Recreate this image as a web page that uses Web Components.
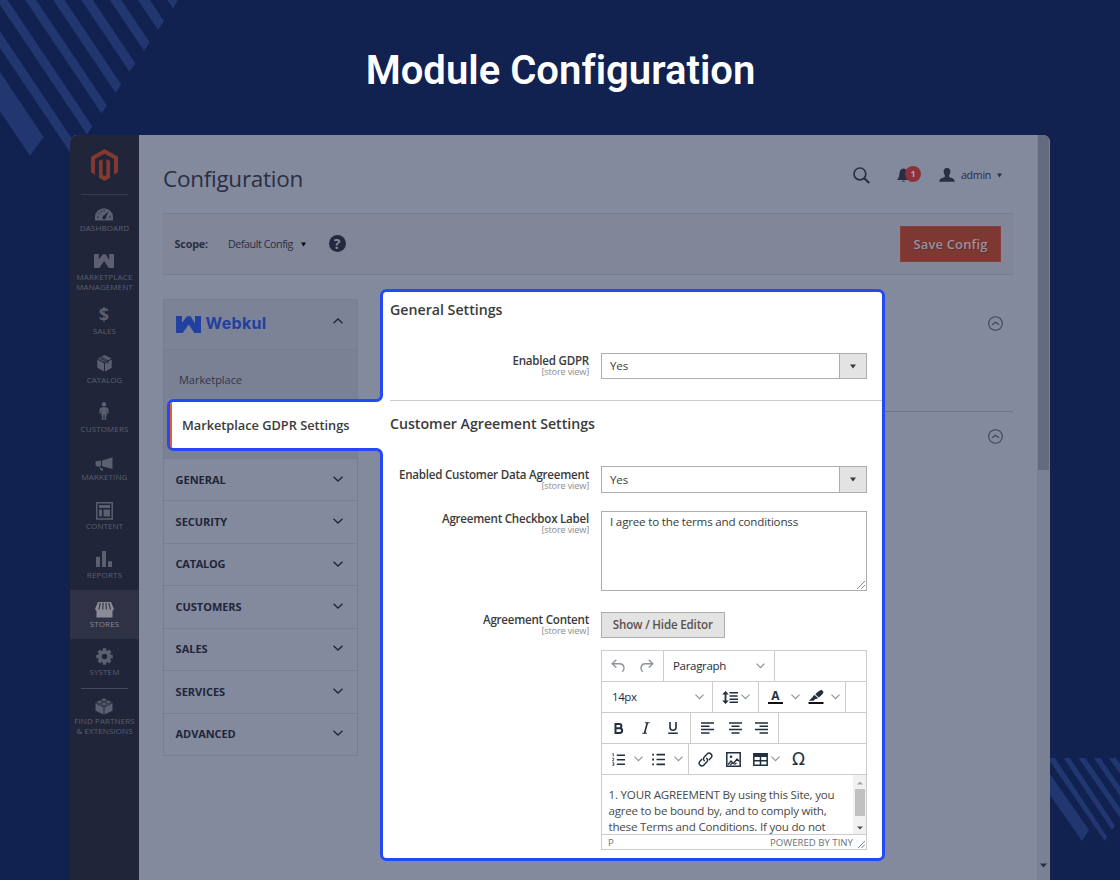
<!DOCTYPE html>
<html lang="en">
<head>
<meta charset="utf-8">
<title>Module Configuration</title>
<style>
    html, body {
        margin: 0;
        width: 1120px;
        height: 880px;
        overflow: hidden;
    }
    body {
        background: #112150;
        font-family: "Open Sans", "Noto Sans", sans-serif;
    }
</style>
</head>
<body>
<config-page></config-page>

<script>
const icons = {
    magento: ['0 0 81 96', '<path fill="currentColor" d="M40.500 0L81 23V70L69 77V30L40.500 14L12 30V77L0 70V23Z M24 36L35 30V78L40.500 81L46 78V30L57 36V86L40.500 96L24 86Z"/>'],
    gauge: ['0 0 18 13', '<path fill="currentColor" fill-rule="evenodd" d="M0 12.500V9a9 8.800 0 0 1 18 0v3.500zM7.300 9.600a1.800 1.800 0 0 0 3.400.8L13.300 3.600 8 8.200z"/><path stroke="#202539" stroke-width=".9" d="M2 9h2M3.600 4.600l1.300 1M9 1.800v1.700M16 9h-2M6 2.700l.6 1.300"/><circle cx="9" cy="9.700" r="1" fill="#202539"/>'],
    webkul: ['0 0 75 50', '<path fill="currentColor" d="M0 0H18V20L33 1H44L57 22V0H75V50H55L38 25L20 50H0Z"/>'],
    box: ['0 0 16 17', '<path fill="currentColor" d="M8 0L15.300 3.500 8 7.200 .7 3.500zM.300 4.600L7.500 8.300V16.600L.300 12.800zM15.700 4.600L8.500 8.300V16.600l7.200-3.800z"/><path stroke="#202539" stroke-width="1" fill="none" d="M4.200 1.900l7.400 3.700v3.200M2.500 2.800l7.400 3.700"/>'],
    person: ['0 0 10 18', '<g fill="currentColor"><circle cx="5" cy="2.300" r="2.300"/><path d="M2.500 5.200h5L9.500 7v4.500H8V8.200h-.4V12l-.7 6H5.500V12.500h-1V18H3.100L2.400 12V8.200H2v3.300H.5V7z"/></g>'],
    horn: ['0 0 18 15', '<path fill="currentColor" d="M17.500.3V12L7 9.300V3.600zM6 3.700v5.400l-1.300.2.1 1.200 2.800 1 .5 2.700L5.500 13 4 9.400H1.700L.5 8V5.200l1.200-1.300z"/>'],
    layout: ['0 0 17 18', '<path fill="none" stroke="currentColor" stroke-width="1.500" d="M.8.8h15.400v16.200H.8z"/><path fill="currentColor" d="M3 3h11v3H3zM3 7.500h3v7H3zM7.500 7.500H14v7H7.500z"/>'],
    bars: ['0 0 16 17', '<path fill="currentColor" d="M0 6h4v11H0zM6 0h4v17H6zM12 11h4v6h-4z"/>'],
    store: ['0 0 19 16', '<path fill="currentColor" d="M3 0h13l2.800 6.500a2.300 2.300 0 0 1-1.300 2.300V15.500h-16V8.800A2.300 2.300 0 0 1 .2 6.500z"/><path stroke="#2f3145" stroke-width="1.100" fill="none" d="M5.300.8L3.800 7.500M8.200.8l-.5 6.700M11 .8l.4 6.700M13.800.8l1.600 6.700"/>'],
    gear: ['0 0 18 18', '<circle cx="9" cy="9" r="4.900" fill="none" stroke="currentColor" stroke-width="4"/><path stroke="currentColor" stroke-width="3.600" d="M9 .3v3M9 14.700v3M.3 9h3M14.700 9h3M2.850 2.850L5 5M13 13l2.150 2.150M2.850 15.150L5 13M13 5l2.150-2.150"/>'],
    brick: ['0 0 18 18', '<path fill="currentColor" d="M9 1.600l8.500 4.200v8L9 17.800.5 13.800v-8z"/><path fill="none" stroke="#202539" stroke-width=".9" d="M.7 6L9 10.200 17.300 6M9 10.200V18"/><g fill="currentColor" stroke="#202539" stroke-width=".7"><ellipse cx="9" cy="2.600" rx="2.700" ry="1.600"/><ellipse cx="4.700" cy="4.800" rx="2.600" ry="1.500"/><ellipse cx="13.300" cy="4.800" rx="2.600" ry="1.500"/><ellipse cx="9" cy="7" rx="2.600" ry="1.500"/></g>'],
    search: ['0 0 17 17', '<circle cx="6.900" cy="6.900" r="5.900" fill="none" stroke="currentColor" stroke-width="1.700"/><path stroke="currentColor" stroke-width="2.300" d="M11 11l5.200 5"/>'],
    bell: ['0 0 13 14', '<path fill="currentColor" d="M6.500.5C9.500.8 10.500 3 10.600 6c.1 2.700.9 4 2.100 5.200v.9H.3v-.9C1.500 10 2.300 8.700 2.400 6 2.500 3 3.500.8 6.500.5zM5 12.700h3c-.2 1.500-2.800 1.500-3 0z"/>'],
    user: ['0 0 16 14', '<path fill="currentColor" d="M8 0c2.400 0 3.500 1.500 3.400 3.600C11.300 5.600 10.500 6.700 10 7.500c-.3 1 .3 1.700 1.500 2.100 3 .8 4 1.600 4.200 4.200H.3c.2-2.600 1.200-3.400 4.200-4.200C5.700 9.200 6.300 8.500 6 7.500 5.500 6.700 4.700 5.600 4.600 3.600 4.500 1.500 5.600 0 8 0z"/>'],
    caret: ['0 0 6 5', '<path fill="currentColor" d="M0 .5h6L3 4.500z"/>'],
    caretUp: ['0 0 6 5', '<path fill="currentColor" d="M0 4.500h6L3 .5z"/>'],
    down: ['0 0 10 6', '<path fill="none" stroke="currentColor" stroke-width="1.300" d="M.5.7L5 5 9.500.7"/>'],
    up: ['0 0 10 6', '<path fill="none" stroke="currentColor" stroke-width="1.300" d="M.5 5.300L5 1l4.500 4.300"/>'],
    circleUp: ['0 0 15 15', '<circle cx="7.500" cy="7.500" r="6.800" fill="none" stroke="currentColor" stroke-width="1.100"/><path fill="none" stroke="currentColor" stroke-width="1.200" d="M4 8.800l3.500-2.600L11 8.800"/>'],
    undo: ['0 0 14 14', '<path fill="none" stroke="currentColor" stroke-width="1.400" d="M5.300.8L1.200 4.700l4.100 3.900M1.400 4.700h7.400c5 .2 5 5.500 2.600 8.200"/>'],
    redo: ['0 0 14 14', '<path fill="none" stroke="currentColor" stroke-width="1.400" d="M8.700.8l4.100 3.900-4.100 3.900M12.600 4.700H5.200c-5 .2-5 5.500-2.600 8.200"/>'],
    lineHeight: ['0 0 16 13', '<path fill="currentColor" d="M3.500 0L6.800 3.600H4.400v5.800h2.400L3.500 13 .2 9.400h2.400V3.600H.2z"/><path stroke="currentColor" stroke-width="1.500" d="M7.500 1.800H16M7.500 5h8M7.500 8.200H16M7.500 11.300H16"/>'],
    pen: ['0 0 16 14', '<path fill="currentColor" d="M13.800 0l1.600 1.800c.4 1.200-1.900 3.800-4.600 5.700L7.300 4.300C9.500 2 12.500-.4 13.800 0zM6.500 4.900l3.600 3.200c-1.100.9-2 1.100-2.800.9L5.500 10.700H.9l3.600-3.500c.3-.8 1-1.800 2-2.300z"/><path fill="#111" d="M.5 12h15v2H.5z"/>'],
    bold: ['0 0 10 11', '<path fill="none" stroke="currentColor" stroke-width="2" d="M1.500 1h3.800a2 2 0 0 1 0 4.200H1.500h4.300a2.300 2.300 0 0 1 0 4.700H1.500z"/>'],
    italic: ['0 0 8 12', '<path fill="none" stroke="currentColor" stroke-width="1.100" d="M3 .8h4.600M.3 11.200h4.600"/><path stroke="currentColor" stroke-width="1.600" d="M5.300.8L2.600 11.200"/>'],
    underline: ['0 0 10 12', '<path fill="none" stroke="currentColor" stroke-width="1.600" d="M2 0v5.200a3 3 0 0 0 6 0V0M.2 11.200h9.600"/>'],
    left: ['0 0 13 12', '<path stroke="currentColor" stroke-width="1.500" d="M0 1h13M0 4.300h8.500M0 7.600h13M0 10.900h8.500"/>'],
    center: ['0 0 13 12', '<path stroke="currentColor" stroke-width="1.500" d="M0 1h13M2.500 4.300h8M0 7.600h13M2.500 10.900h8"/>'],
    right: ['0 0 13 12', '<path stroke="currentColor" stroke-width="1.500" d="M0 1h13M4.500 4.300H13M0 7.600h13M4.500 10.900H13"/>'],
    ol: ['0 0 13 13', '<path stroke="currentColor" stroke-width="1.600" d="M4.800 2.200H13M4.800 6.700H13M4.800 11.200H13"/><path fill="none" stroke="currentColor" stroke-width=".8" d="M.4.9l.9-.4v3M.3 5.300h1.500v1L.5 7.800H2M.3 9.700h1.500v3H.3M.8 11.200h1"/>'],
    ul: ['0 0 13 13', '<path stroke="currentColor" stroke-width="1.600" d="M4.500 1.600H13M4.500 6.500H13M4.500 11.400H13"/><path stroke="currentColor" stroke-width="1.800" d="M.2 1.600H2M.2 6.500H2M.2 11.400H2"/>'],
    link: ['0 0 16 16', '<g fill="none" stroke="currentColor" stroke-width="1.500" stroke-linecap="round"><path d="M6.700 9.300a2.800 2.800 0 0 1 0-4l3-3.200a2.800 2.800 0 0 1 4.200 4l-2 2.200"/><path d="M9.300 6.700a2.800 2.800 0 0 1 0 4l-3 3.200a2.800 2.800 0 0 1-4.200-4l2-2.200"/></g>'],
    image: ['0 0 15 15', '<path fill="none" stroke="currentColor" stroke-width="1.500" d="M.8.8h13.400v13.400H.8z"/><path fill="none" stroke="currentColor" stroke-width="1.300" d="M2 12.500l3-3.500 2.500 2.500 3.500-4.500 2.500 2.500M4 13l2.500-2M8.500 12.500l2-1.500"/><circle cx="5" cy="4.800" r="1.300" fill="currentColor"/>'],
    table: ['0 0 15 13', '<path fill="none" stroke="currentColor" stroke-width="1.500" d="M.8.800h13.400v11.400H.8zM7.500 3v9M1 7.800h13"/><path fill="currentColor" d="M.8.8h13.400v3.200H.8z"/>'],
    grip: ['0 0 8 8', '<path stroke="currentColor" stroke-width="1" d="M0 8l8-8M4 8l4-4"/>']
};

// inline icon, sized by its w and h attributes
class UiIcon extends HTMLElement {
    constructor() {
        super();
        this.attachShadow({ mode: 'open' });
    }
    connectedCallback() {
        const [box, body] = icons[this.getAttribute('name')];
        const w = this.getAttribute('w');
        const h = this.getAttribute('h');
        this.shadowRoot.innerHTML = `
            <style>:host { display: block; flex: none; width: ${w}px; height: ${h}px; } svg { display: block; }</style>
            <svg width="${w}" height="${h}" viewBox="${box}" preserveAspectRatio="none">${body}</svg>`;
    }
}

// one line of text whose letter spacing is tuned to fill "w" pixels
class FitText extends HTMLElement {
    constructor() {
        super();
        this.attachShadow({ mode: 'open' });
    }
    connectedCallback() {
        const size = this.getAttribute('s') || 11;
        const weight = this.getAttribute('b') || 400;
        this.shadowRoot.innerHTML = `
            <style>
                :host { display: block; flex: none; white-space: nowrap; font-size: ${size}px; font-weight: ${weight}; line-height: 1.2; }
                span { display: inline-block; }
            </style>
            <span><slot></slot></span>`;
        const target = Number(this.getAttribute('w'));
        const span = this.shadowRoot.querySelector('span');
        if (target) {
            const natural = span.getBoundingClientRect().width;
            const gap = (target - natural) / this.textContent.length;
            span.style.letterSpacing = gap.toFixed(3) + 'px';
        }
    }
}

class PageBackdrop extends HTMLElement {
    constructor() {
        super();
        this.attachShadow({ mode: 'open' });
        // right tip and bottom tip of each stripe
        const tips = [
            [43.7, 137, 30, 156], [78, 147.500, 72.500, 156], [92.5, 126.5, 87, 134.500], [107, 105.500, 101.500, 113.500],
            [121.300, 84.500, 115.500, 92.800], [135.500, 63.500, 129.500, 71.700], [149.700, 42.300, 144, 51],
            [164, 21, 158, 30], [178, 0, 173, 8.500]
        ];
        const stripes = tips.map(([a, b, c, d]) =>
            `<polygon points="${a},${b} ${c},${d} ${c - 200},${d - 298} ${a - 200},${b - 298}"/>`).join('');
        this.shadowRoot.innerHTML = `
            <style>
                :host { position: absolute; inset: 0; }
                svg { position: absolute; fill: #22366f; }
                .tl { left: 0; top: 0; }
                .br { right: 0; top: 758px; }
            </style>
            <svg class="tl" width="200" height="160">${stripes}</svg>
            <svg class="br" width="70" height="90">
                <polygon points="0,16 39,72 32,83.300 0,37"/>
                <polygon points="-2,-1 4.300,-1 57.300,79 54.700,83 0,3.500"/>
                <polygon points="12.800,-1 19.300,-1 65,67.700 62,72"/>
                <polygon points="27.800,-1 34.700,-1 80,64.700 73.500,64.700"/>
                <polygon points="43,-1 49.700,-1 95,64.700 88.500,64.700"/>
                <polygon points="58.300,-1 65.300,-1 110,64.700 104,64.700"/>
            </svg>`;
    }
}

class MenuItem extends HTMLElement {
    constructor() {
        super();
        this.attachShadow({ mode: 'open' });
        this.shadowRoot.innerHTML = `
            <style>
                :host { display: block; height: 48.75px; color: #5c5f70; position: relative; }
                :host([active]) { background: #2f3145; color: #8a8b96; }
                :host([rule])::before { content: ""; display: block; position: absolute; top: 0; left: 11px; right: 11px; height: 1px; background: #45485a; }
                .icon { height: 28px; display: flex; align-items: flex-end; justify-content: center; padding-right: 1px; }
                .label { display: flex; flex-direction: column; align-items: center; padding-top: .7px; gap: .3px; }
            </style>
            <div class="icon"><slot name="icon"></slot></div>
            <div class="label"><slot></slot></div>`;
    }
}

class SideMenu extends HTMLElement {
    constructor() {
        super();
        this.attachShadow({ mode: 'open' });
        this.shadowRoot.innerHTML = `
            <style>
                :host { display: block; width: 69px; background: #202539; }
                .logo { height: 59px; display: flex; justify-content: center; color: #84392f; position: relative; }
                .logo ui-icon { margin-top: 13.5px; }
                .logo::after { content: ""; position: absolute; bottom: -1px; left: 11px; right: 11px; height: 1px; background: #3a3d50; }
                .dollar { font: 700 18px/18px "Open Sans"; height: 18px; margin-bottom: 3px; }
            </style>
            <div class="logo"><ui-icon name="magento" w="27" h="32"></ui-icon></div>
            <menu-item style="height:49px"><ui-icon slot="icon" name="gauge" w="18" h="13" style="margin-bottom:1px"></ui-icon><fit-text s="8" w="49.5">DASHBOARD</fit-text></menu-item>
            <menu-item style="height:54.5px"><ui-icon slot="icon" name="webkul" w="20" h="14" style="margin-bottom:3px"></ui-icon><fit-text s="8" w="56">MARKETPLACE</fit-text><fit-text s="8" w="56.5">MANAGEMENT</fit-text></menu-item>
            <menu-item><div class="dollar" slot="icon">$</div><fit-text s="8" w="23">SALES</fit-text></menu-item>
            <menu-item><ui-icon slot="icon" name="box" w="15" h="17" style="margin-bottom:2px"></ui-icon><fit-text s="8" w="35.5">CATALOG</fit-text></menu-item>
            <menu-item><ui-icon slot="icon" name="person" w="10" h="18" style="margin-bottom:3px"></ui-icon><fit-text s="8" w="48">CUSTOMERS</fit-text></menu-item>
            <menu-item><ui-icon slot="icon" name="horn" w="18" h="15"></ui-icon><fit-text s="8" w="46">MARKETING</fit-text></menu-item>
            <menu-item><ui-icon slot="icon" name="layout" w="17" h="18" style="margin-bottom:1px"></ui-icon><fit-text s="8" w="37">CONTENT</fit-text></menu-item>
            <menu-item><ui-icon slot="icon" name="bars" w="16" h="16" style="margin-bottom:2px"></ui-icon><fit-text s="8" w="35.5">REPORTS</fit-text></menu-item>
            <menu-item active><ui-icon slot="icon" name="store" w="19" h="16"></ui-icon><fit-text s="8" w="29.5">STORES</fit-text></menu-item>
            <menu-item><ui-icon slot="icon" name="gear" w="17" h="17" style="margin-bottom:2px"></ui-icon><fit-text s="8" w="30">SYSTEM</fit-text></menu-item>
            <menu-item rule><ui-icon slot="icon" name="brick" w="18" h="18" style="margin-bottom:1px"></ui-icon><fit-text s="8" w="60.5">FIND PARTNERS</fit-text><fit-text s="8" w="56.5">&amp; EXTENSIONS</fit-text></menu-item>`;
    }
}

class ConfigNav extends HTMLElement {
    constructor() {
        super();
        this.attachShadow({ mode: 'open' });
        const rows = [['GENERAL', 50], ['SECURITY', 51.5], ['CATALOG', 49.5], ['CUSTOMERS', 66], ['SALES', 32], ['SERVICES', 49.5], ['ADVANCED', 60]];
        this.shadowRoot.innerHTML = `
            <style>
                :host { display: block; box-sizing: border-box; width: 195px; height: 457px; border: 1px solid #787e91; color: #202539; }
                .head, .row { display: flex; justify-content: space-between; align-items: center; padding: 0 14px 0 12px; box-sizing: border-box; }
                .head { height: 50px; background: #7d8396; border-bottom: 1px solid #787e91; }
                .brand { display: flex; align-items: center; gap: 4.5px; color: #2140a0; font-family: Inter, sans-serif; margin-top: -1px; }
                .sub { height: 108px; background: #7b8194; box-sizing: border-box; padding: 23px 15px; color: #30354a; }
                .row { height: 42.43px; border-top: 1px solid #787e91; padding-bottom: 1px; }
                .row fit-text { margin-left: -.4px; }
                .row ui-icon { margin-bottom: 1px; }
            </style>
            <div class="head">
                <div class="brand"><ui-icon name="webkul" w="25" h="17"></ui-icon><fit-text s="16" b="700" w="61">Webkul</fit-text></div>
                <ui-icon name="up" w="10" h="6" style="margin-bottom:8px"></ui-icon>
            </div>
            <div class="sub"><fit-text s="11" w="63">Marketplace</fit-text></div>
            ${rows.map(([t, w]) => `<div class="row"><fit-text s="11" b="700" w="${w}">${t}</fit-text><ui-icon name="down" w="10" h="6"></ui-icon></div>`).join('')}`;
    }
}

class AdminWindow extends HTMLElement {
    constructor() {
        super();
        this.attachShadow({ mode: 'open' });
        this.shadowRoot.innerHTML = `
            <style>
                :host { display: flex; width: 980px; height: 745px; margin: 0 auto; background: #848a9e; border-radius: 7px 7px 0 0; overflow: hidden; color: #2a2e42; }
                main { flex: 1; padding: 0 24px; }
                header { height: 78px; display: flex; justify-content: space-between; box-sizing: border-box; }
                header fit-text.title { padding-top: 30px; }
                .tools { display: flex; align-items: center; height: 80px; padding-right: 11px; }
                .badge { width: 16px; height: 16px; border-radius: 8px; background: #8b323b; color: #aaa6b6; font-size: 9px; font-weight: 700; line-height: 16px; text-align: center; margin: -3px 18px 0 -5px; position: relative; }
                .bar { height: 62px; box-sizing: border-box; border: solid #777c90; border-width: 1px 0; background: #818799; display: flex; align-items: center; padding: 0 12px 0 11.5px; }
                .help { width: 17px; height: 17px; border-radius: 50%; background: #25293e; color: #848a9e; font-weight: 700; font-size: 14px; line-height: 17px; text-align: center; margin: -1px 0 0 23px; }
                button { margin-left: auto; width: 101px; height: 36px; padding: 2px 0 0; border: 1px solid #85403b; background: #7f3732; color: #98929f; font-family: inherit; display: flex; align-items: center; justify-content: center; text-shadow: 1px 1px 0 rgba(30, 20, 40, .3); }
                .cols { display: flex; justify-content: space-between; margin-top: 24px; }
                .sections { flex: 1; margin-left: 24px; color: #3f4458; }
                .sections div { height: 113px; display: flex; justify-content: flex-end; padding: 17px 10px 0 0; box-sizing: border-box; border-bottom: 1px solid #6f7588; }
                .sections div + div { border: 0; height: 40px; }
                .scroll { width: 13px; background: #7b8194; position: relative; display: flex; flex-direction: column; justify-content: space-between; align-items: center; }
                .scroll i { width: 11px; height: 335px; background: #646b7f; }
                .scroll ui-icon { margin-bottom: 12px; }
            </style>
            <side-menu></side-menu>
            <main>
                <header>
                    <fit-text class="title" s="22.5" w="140">Configuration</fit-text>
                    <div class="tools">
                        <ui-icon name="search" w="17" h="17" style="margin-right:27px"></ui-icon>
                        <ui-icon name="bell" w="13" h="14"></ui-icon>
                        <div class="badge">1</div>
                        <ui-icon name="user" w="16" h="14" style="margin-right:6px"></ui-icon>
                        <fit-text s="10.7" w="30">admin</fit-text>
                        <ui-icon name="caret" w="5" h="5" style="margin-left:6px"></ui-icon>
                    </div>
                </header>
                <div class="bar">
                    <fit-text s="10.7" b="700" w="33.5">Scope:</fit-text>
                    <fit-text s="10.7" w="65" style="margin-left:20px">Default Config</fit-text>
                    <ui-icon name="caret" w="5" h="5" style="margin-left:7.5px;color:#05060c"></ui-icon>
                    <div class="help">?</div>
                    <button><fit-text s="13" b="600" w="74">Save Config</fit-text></button>
                </div>
                <div class="cols">
                    <config-nav></config-nav>
                    <div class="sections">
                        <div><ui-icon name="circleUp" w="15" h="15"></ui-icon></div>
                        <div><ui-icon name="circleUp" w="15" h="15"></ui-icon></div>
                    </div>
                </div>
            </main>
            <div class="scroll"><i></i><ui-icon name="caret" w="7" h="5"></ui-icon></div>`;
    }
}

class FieldRow extends HTMLElement {
    constructor() {
        super();
        this.attachShadow({ mode: 'open' });
        this.shadowRoot.innerHTML = `
            <style>
                :host { display: grid; grid-template-columns: 209px 266px; column-gap: 12px; color: #3b3b3b; }
                .label { display: flex; flex-direction: column; align-items: flex-end; padding-top: var(--label-drop, .6px); }
                .hint { color: #8c8c8c; margin-top: -1.1px; }
            </style>
            <div class="label"><slot name="label"></slot><fit-text class="hint" s="9.2" w="47.5">[store view]</fit-text></div>
            <slot></slot>`;
    }
}

class SelectBox extends HTMLElement {
    constructor() {
        super();
        this.attachShadow({ mode: 'open' });
        this.shadowRoot.innerHTML = `
            <style>
                :host { display: flex; align-items: center; justify-content: space-between; box-sizing: border-box; height: 26px; border: 1px solid #adadad; background: #fff; padding-left: 8px; }
                .arrow { width: 27px; align-self: stretch; display: flex; align-items: center; justify-content: center; background: #e3e3e3; border-left: 1px solid #adadad; color: #41362f; box-sizing: border-box; }
            </style>
            <fit-text s="11.5" w="18">Yes</fit-text>
            <div class="arrow"><ui-icon name="caret" w="6" h="5"></ui-icon></div>`;
    }
}

class TinyEditor extends HTMLElement {
    constructor() {
        super();
        this.attachShadow({ mode: 'open' });
        const chev = ml => `<ui-icon class="chev" name="down" w="9" h="5.500" style="margin-left:${ml}px"></ui-icon>`;
        const ic = (name, w, h, ml) => `<ui-icon name="${name}" w="${w}" h="${h}" style="margin-left:${ml}px"></ui-icon>`;
        this.shadowRoot.innerHTML = `
            <style>
                :host { display: block; box-sizing: border-box; width: 266px; height: 200px; border: 1px solid #ccc; color: #222f3e; }
                .row { display: flex; height: 30px; border-bottom: 1px solid #ccc; }
                .group { display: flex; align-items: center; box-sizing: border-box; border-right: 1px solid #ccc; }
                .group.open { border-right: 0; }
                .chev { color: #8d949c; }
                .grey { color: #8d949c; }
                .letter { width: 15px; margin-left: 9px; margin-right: 1px; text-align: center; font: 700 12px/11px "Open Sans"; border-bottom: 2px solid #111; padding-bottom: 1px; box-sizing: border-box; height: 14px; }
                .omega { font: 400 17px/20px "DejaVu Sans"; margin-left: 12.5px; }
                .body { display: flex; justify-content: space-between; height: 59px; overflow: hidden; color: #4a4948; }
                .copy { padding: 13px 0 0 6.500px; }
                .copy fit-text { height: 16px; }
                .bar { width: 13px; background: #f1f1f1; display: flex; flex-direction: column; align-items: center; justify-content: space-between; }
                .bar i { width: 10px; height: 27px; background: #c1c1c1; margin-bottom: 7px; }
                .foot { display: flex; align-items: center; height: 14px; border-top: 1px solid #ccc; color: #6a737c; padding-left: 6px; padding-top: 2px; box-sizing: border-box; }
            </style>
            <div class="row">
                <div class="group grey" style="width:62px">${ic('undo', 14, 14, 9)}${ic('redo', 14, 14, 15)}</div>
                <div class="group" style="width:111px"><fit-text s="11.5" w="53" style="margin-left:9px">Paragraph</fit-text>${chev(30)}</div>
            </div>
            <div class="row">
                <div class="group" style="width:111px"><fit-text s="11.5" w="24.5" style="margin-left:10px">14px</fit-text>${chev(58)}</div>
                <div class="group" style="width:46px">${ic('lineHeight', 16, 13, 9)}${chev(3)}</div>
                <div class="group" style="width:87px"><div class="letter">A</div>${chev(7)}${ic('pen', 16, 14, 7.5)}${chev(7.5)}</div>
            </div>
            <div class="row">
                <div class="group" style="width:89px">${ic('bold', 10, 11, 12)}${ic('italic', 8, 12, 18)}${ic('underline', 10, 12, 17.5)}</div>
                <div class="group" style="width:88px">${ic('left', 13, 12, 10)}${ic('center', 13, 12, 14.5)}${ic('right', 13, 12, 13.5)}</div>
            </div>
            <div class="row">
                <div class="group" style="width:87px">${ic('ol', 13, 13, 9.5)}${chev(9.5)}${ic('ul', 13, 13, 9)}${chev(9)}</div>
                <div class="group open">${ic('link', 15, 15, 9)}${ic('image', 15, 15, 12.5)}${ic('table', 15, 13, 12)}${chev(3)}<div class="omega">Ω</div></div>
            </div>
            <div class="body">
                <div class="copy">
                    <fit-text s="11.6" w="226">1. YOUR AGREEMENT By using this Site, you</fit-text>
                    <fit-text s="11.6" w="218">agree to be bound by, and to comply with,</fit-text>
                    <fit-text s="11.6" w="217">these Terms and Conditions. If you do not</fit-text>
                </div>
                <div class="bar">
                    <ui-icon name="caretUp" w="6" h="4" style="margin-top:6px;color:#a3a3a3"></ui-icon>
                    <i></i>
                    <ui-icon name="caret" w="6" h="4" style="margin-bottom:4px;color:#505050"></ui-icon>
                </div>
            </div>
            <div class="foot"><fit-text s="9.6">P</fit-text><fit-text s="9.6" w="83" style="margin-left:auto">POWERED BY TINY</fit-text><ui-icon name="grip" w="7" h="7" style="margin:4px 1px 0 5px"></ui-icon></div>`;
    }
}

class SpotlightPanel extends HTMLElement {
    constructor() {
        super();
        this.attachShadow({ mode: 'open' });
        this.shadowRoot.innerHTML = `
            <style>
                :host { position: absolute; left: 380px; top: 289px; width: 505px; height: 572px; color: #4a4948; }
                .shape { position: absolute; left: -214px; top: 0; }
                .tab { position: absolute; left: -198px; top: 129px; color: #3b3b3b; }
                .body { position: relative; }
                h2 { margin: 0; padding-left: 10px; display: flex; align-items: center; color: #3b3b3b; box-sizing: border-box; }
                .line { height: 1px; margin: 21px 3px 0 10px; background: #ccc; }
                .area { box-sizing: border-box; height: 80px; border: 1px solid #adadad; padding: 3px 8px; display: flex; justify-content: space-between; }
                .area ui-icon { align-self: flex-end; margin: 0 -7px -2px 0; color: #8a8a8a; }
                button { width: 123.500px; height: 26px; padding: 0; border: 1px solid #adadad; background: #e3e3e3; color: #5a524c; font-family: inherit; display: flex; align-items: center; justify-content: center; }
                tiny-editor { margin: 12px 0 0 221px; }
            </style>
            <svg class="shape" width="719" height="572">
                <path fill="#fff" stroke="#2349f2" stroke-width="3" d="M220.500 1.500H712.500a5 5 0 0 1 5 5V565.500a5 5 0 0 1-5 5H220.500a5 5 0 0 1-5-5V165.500a5 5 0 0 0-5-5H7.500a5 5 0 0 1-5-5V116.500a5 5 0 0 1 5-5H210.500a5 5 0 0 0 5-5V6.500a5 5 0 0 1 5-5z"/>
                <path fill="#eb5a2b" d="M4 115.500q0-1.500 2-2.500V159q-2-1-2-2.500z"/>
            </svg>
            <div class="tab"><fit-text s="12.800" b="600" w="167.5">Marketplace GDPR Settings</fit-text></div>
            <div class="body">
                <h2 style="height:42px"><fit-text s="14.2" b="600" w="112.5">General Settings</fit-text></h2>
                <field-row style="margin-top:22px">
                    <fit-text slot="label" s="11.6" b="600" w="76.5">Enabled GDPR</fit-text>
                    <select-box></select-box>
                </field-row>
                <div class="line"></div>
                <h2 style="height:46px"><fit-text s="14.2" b="600" w="205">Customer Agreement Settings</fit-text></h2>
                <field-row style="margin-top:19px;--label-drop:1.6px">
                    <fit-text slot="label" s="11.6" b="600" w="190">Enabled Customer Data Agreement</fit-text>
                    <select-box style="height:27px"></select-box>
                </field-row>
                <field-row style="margin-top:18px">
                    <fit-text slot="label" s="11.6" b="600" w="147">Agreement Checkbox Label</fit-text>
                    <div class="area"><fit-text s="11.6" w="188">I agree to the terms and conditionss</fit-text><ui-icon name="grip" w="8" h="8"></ui-icon></div>
                </field-row>
                <field-row style="margin-top:21px">
                    <fit-text slot="label" s="11.6" b="600" w="106">Agreement Content</fit-text>
                    <button><fit-text s="11.6" b="600" w="100">Show / Hide Editor</fit-text></button>
                </field-row>
                <tiny-editor></tiny-editor>
            </div>`;
    }
}

class ConfigPage extends HTMLElement {
    constructor() {
        super();
        this.attachShadow({ mode: 'open' });
        this.shadowRoot.innerHTML = `
            <style>
                :host { display: block; position: relative; width: 1120px; height: 880px; overflow: hidden; }
                h1 { position: relative; margin: 0; height: 135px; display: flex; justify-content: center; align-items: center; box-sizing: border-box; padding: 7px 0 0 1px; color: #fff; font-family: Roboto, sans-serif; }
                admin-window { position: relative; }
            </style>
            <page-backdrop></page-backdrop>
            <h1><fit-text s="40" b="600" w="389">Module Configuration</fit-text></h1>
            <admin-window></admin-window>
            <spotlight-panel></spotlight-panel>`;
    }
}

customElements.define('page-backdrop', PageBackdrop);
customElements.define('config-page', ConfigPage);
customElements.define('admin-window', AdminWindow);
customElements.define('side-menu', SideMenu);
customElements.define('menu-item', MenuItem);
customElements.define('config-nav', ConfigNav);
customElements.define('spotlight-panel', SpotlightPanel);
customElements.define('field-row', FieldRow);
customElements.define('select-box', SelectBox);
customElements.define('tiny-editor', TinyEditor);
customElements.define('ui-icon', UiIcon);
customElements.define('fit-text', FitText);
</script>
</body>
</html>
